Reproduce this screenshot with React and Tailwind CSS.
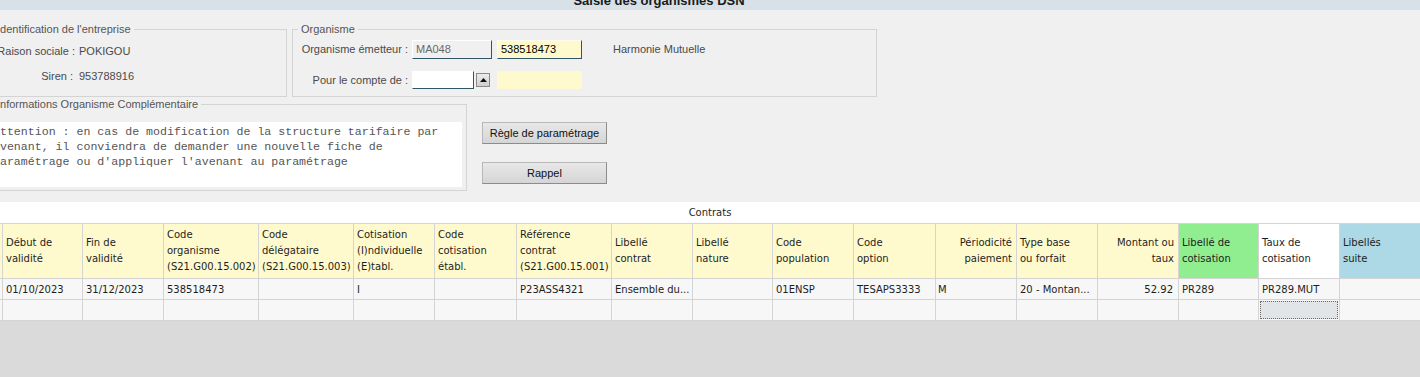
import React from "react";

const headers = [
  { lines: [""], bg: "bg-[#fffacd]" },
  { lines: ["Début de", "validité"], bg: "bg-[#fffacd]" },
  { lines: ["Fin de", "validité"], bg: "bg-[#fffacd]" },
  { lines: ["Code", "organisme", "(S21.G00.15.002)"], bg: "bg-[#fffacd]" },
  { lines: ["Code", "délégataire", "(S21.G00.15.003)"], bg: "bg-[#fffacd]" },
  { lines: ["Cotisation", "(I)ndividuelle", "(E)tabl."], bg: "bg-[#fffacd]" },
  { lines: ["Code", "cotisation", "établ."], bg: "bg-[#fffacd]" },
  { lines: ["Référence", "contrat", "(S21.G00.15.001)"], bg: "bg-[#fffacd]" },
  { lines: ["Libellé", "contrat"], bg: "bg-[#fffacd]" },
  { lines: ["Libellé", "nature"], bg: "bg-[#fffacd]" },
  { lines: ["Code", "population"], bg: "bg-[#fffacd]" },
  { lines: ["Code", "option"], bg: "bg-[#fffacd]" },
  { lines: ["Périodicité", "paiement"], bg: "bg-[#fffacd]", right: true },
  { lines: ["Type base", "ou forfait"], bg: "bg-[#fffacd]" },
  { lines: ["Montant ou", "taux"], bg: "bg-[#fffacd]", right: true },
  { lines: ["Libellé de", "cotisation"], bg: "bg-[#90ee90]" },
  { lines: ["Taux de", "cotisation"], bg: "bg-white" },
  { lines: ["Libellés", "suite"], bg: "bg-[#add8e6]" },
];

const row = [
  "",
  "01/10/2023",
  "31/12/2023",
  "538518473",
  "",
  "I",
  "",
  "P23ASS4321",
  "Ensemble du...",
  "",
  "01ENSP",
  "TESAPS3333",
  "M",
  "20 - Montan...",
  "52.92",
  "PR289",
  "PR289.MUT",
  "",
];

const formFont = { fontFamily: '"Liberation Sans", Arial, sans-serif' };
const tableFont = { fontFamily: '"DejaVu Sans", Verdana, sans-serif' };

function Legend({ children }) {
  return (
    <legend className="ml-[5px] px-[3px] text-[11px] leading-[13px] text-[#555]">
      {children}
    </legend>
  );
}

export default function App() {
  return (
    <div
      className="w-[1420px] h-[377px] overflow-hidden bg-[#f0f0f0] flex flex-col"
      style={formFont}
    >
      {/* Title bar */}
      <div className="h-[10px] shrink-0 bg-[#d7e1e7] overflow-hidden flex justify-center pr-[102px]">
        <div className="mt-[-6px] text-[13px] leading-[13px] font-bold text-[#1a1a1a] whitespace-nowrap">
          Saisie des organismes DSN
        </div>
      </div>

      {/* Upper form */}
      <div className="ml-[-12px] mt-[13px] flex flex-col shrink-0">
        <div className="flex">
          <fieldset className="w-[299px] h-[74px] border border-[#d4d4d4]">
            <Legend>Identification de l'entreprise</Legend>
            <div className="flex flex-col text-[11px] text-[#4a4a4a]">
              <div className="flex items-center h-[20px] mt-[5px]">
                <div className="w-[86px] text-right whitespace-nowrap">Raison sociale :</div>
                <div className="ml-[4px]">POKIGOU</div>
              </div>
              <div className="flex items-center h-[20px] mt-[5px]">
                <div className="w-[84px] text-right whitespace-nowrap">Siren :</div>
                <div className="ml-[6px]">953788916</div>
              </div>
            </div>
          </fieldset>

          <fieldset className="ml-[5px] w-[585px] h-[74px] border border-[#d4d4d4]">
            <Legend>Organisme</Legend>
            <div className="flex flex-col text-[11px] text-[#4a4a4a]">
              <div className="flex items-center h-[19px] mt-[4px]">
                <div className="w-[115px] text-right whitespace-nowrap">Organisme émetteur :</div>
                <div className="ml-[4px] w-[80px] h-[19px] bg-[#f0f0f0] border border-white border-r-[#2f5566] border-b-[#2f5566] pl-[3px] flex items-center text-[#6a6a6a]">
                  MA048
                </div>
                <div className="ml-[5px] w-[85px] h-[19px] bg-[#fffacd] border border-[#fffde8] border-r-[#2f5566] border-b-[#2f5566] pl-[3px] flex items-center text-black">
                  538518473
                </div>
                <div className="ml-[31px] whitespace-nowrap">Harmonie Mutuelle</div>
              </div>
              <div className="flex items-center h-[18px] mt-[12px]">
                <div className="w-[115px] text-right whitespace-nowrap">Pour le compte de :</div>
                <div className="ml-[4px] w-[62px] h-[18px] bg-white border border-white border-r-[#2f5566] border-b-[#2f5566]" />
                <div className="ml-[2px] w-[14px] h-[14px] border border-[#8a8a8a] bg-linear-to-b from-[#ececec] to-[#cfcfcf] flex items-center justify-center">
                  <svg width="7" height="4" viewBox="0 0 7 4">
                    <polygon points="0,4 3.5,0 7,4" fill="#111" />
                  </svg>
                </div>
                <div className="ml-[7px] w-[85px] h-[18px] bg-[#fffacd]" />
              </div>
            </div>
          </fieldset>
        </div>

        <div className="flex mt-[1px]">
          <fieldset className="w-[479px] h-[93px] border border-[#d4d4d4]">
            <Legend>Informations Organisme Complémentaire</Legend>
            <div
              className="ml-[1px] mt-[11px] w-[472px] h-[65px] bg-white pl-[3px] pt-[2px] text-[11.6px] leading-[15px] text-[#555] whitespace-pre"
              style={{ fontFamily: '"Liberation Mono", "Courier New", monospace' }}
            >
              {"Attention : en cas de modification de la structure tarifaire par\navenant, il conviendra de demander une nouvelle fiche de\nparamétrage ou d'appliquer l'avenant au paramétrage"}
            </div>
          </fieldset>

          <div className="ml-[15px] pt-[24px] flex flex-col gap-[18px]">
            <button className="w-[125px] h-[22px] text-[11px] text-[#111] bg-linear-to-b from-[#e8e8e8] to-[#d5d5d5] border border-[#b8b8b8] border-r-[#8c8c8c] border-b-[#8c8c8c]">
              Règle de paramétrage
            </button>
            <button className="w-[125px] h-[22px] text-[11px] text-[#111] bg-linear-to-b from-[#e8e8e8] to-[#d5d5d5] border border-[#b8b8b8] border-r-[#8c8c8c] border-b-[#8c8c8c]">
              Rappel
            </button>
          </div>
        </div>
      </div>

      {/* Table section */}
      <div className="mt-[11px] flex-1 bg-[#dadada] flex flex-col" style={tableFont}>
        <div className="h-[21px] bg-white flex items-center justify-center text-[10px] text-[#1e1e1e]">
          Contrats
        </div>
        <div className="ml-[-21px] border-t border-[#d4d4d4] grid grid-cols-[24px_80px_81px_95px_95px_81px_82px_95px_81px_80px_81px_82px_81px_81px_81px_80px_81px_120px] text-[10px] text-[#1e1e1e]">
          {headers.map((h, i) => (
            <div
              key={"h" + i}
              className={`h-[55px] border-r border-b border-[#d4d4d4] px-[3px] flex flex-col justify-center leading-[16px] whitespace-nowrap overflow-hidden ${h.bg} ${h.right ? "items-end text-right pr-[4px]" : "items-start"}`}
            >
              {h.lines.map((l, j) => (
                <div key={j}>{l}</div>
              ))}
            </div>
          ))}
          {row.map((v, i) => (
            <div
              key={"r" + i}
              className={`h-[21px] bg-[#f7f7f7] border-r border-b border-[#d4d4d4] px-[3px] flex items-center whitespace-nowrap overflow-hidden ${i === 14 ? "justify-end pr-[5px]" : ""} ${i === 12 ? "pl-[2px]" : ""}`}
            >
              {v}
            </div>
          ))}
          {row.map((_, i) => (
            <div
              key={"e" + i}
              className="h-[21px] bg-[#f7f7f7] border-r border-b border-[#d4d4d4] p-px"
            >
              {i === 16 ? (
                <div className="w-full h-full bg-[#e1e5e7] border border-dotted border-[#6a6a6a]" />
              ) : null}
            </div>
          ))}
        </div>
      </div>
    </div>
  );
}
